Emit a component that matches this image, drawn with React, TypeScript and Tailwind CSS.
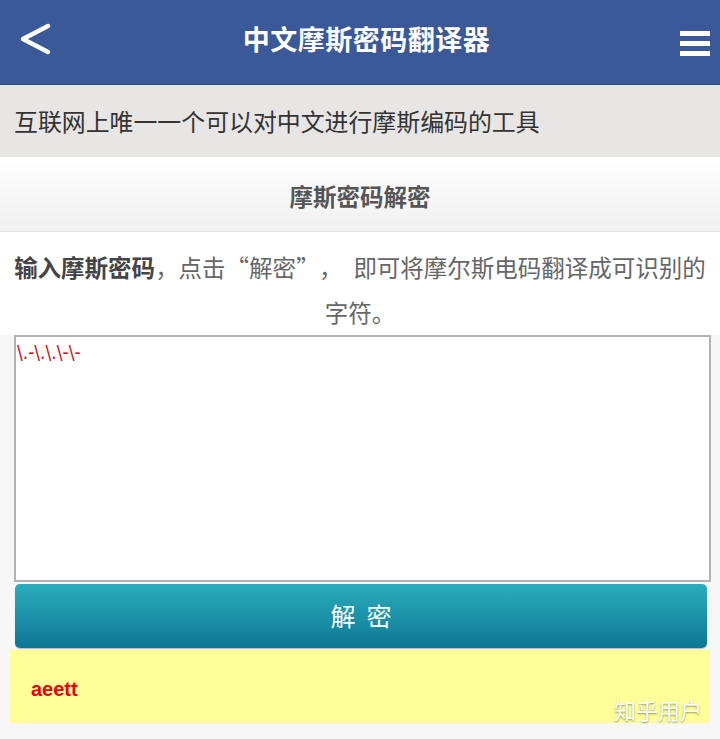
import React from "react"

const cjk = { fontFamily: '"Noto Sans CJK SC", "Noto Sans", sans-serif' }

function Header() {
  return (
    <div className="relative flex h-[85px] items-center justify-center border-b border-[#2f4a82] bg-[#3b5998] pb-[6px] pl-[13px]">
      <svg
        className="absolute left-[18px] top-[22px]"
        width="36"
        height="34"
        viewBox="0 0 36 34"
        fill="none"
      >
        <polyline
          points="30,4 5,17 30,30"
          stroke="white"
          strokeWidth="4.5"
          strokeLinecap="round"
          strokeLinejoin="round"
        />
      </svg>
      <h1 className="text-[27px] font-bold tracking-[0.5px] text-white">中文摩斯密码翻译器</h1>
      <div className="absolute right-[10px] top-[31px] flex w-[30px] flex-col gap-[5px]">
        <span className="h-[5px] bg-white" />
        <span className="h-[5px] bg-white" />
        <span className="h-[5px] bg-white" />
      </div>
    </div>
  )
}

export default function App() {
  return (
    <div className="relative min-h-[739px] bg-[#f5f6f8]" style={cjk}>
      <Header />

      <div className="flex h-[72px] items-center bg-[#e7e6e5] pl-[14px] text-[23.9px] text-[#333]">
        互联网上唯一一个可以对中文进行摩斯编码的工具
      </div>

      <div className="flex h-[75px] items-center justify-center border-b border-[#e2e2e2] bg-gradient-to-b from-white to-[#f0f0f0] pt-[5px] text-[23.5px] font-bold text-[#555]">
        摩斯密码解密
      </div>

      <div className="bg-white">
        <p className="whitespace-nowrap px-[12px] pt-[13px] text-center text-[23.5px] leading-[45px] text-[#666]">
          <b className="font-bold text-[#444]">输入摩斯密码</b>，点击“解密<span className="mr-[11px]">”</span>
          <span className="mr-[11px]">，</span>即可将摩尔斯电码翻译成可识别的
          <br />
          字符。
        </p>
      </div>

      <div className="bg-[#f7f7f7] pb-[16px]">
        <div className="ml-[14px] h-[247px] w-[697px] border-2 border-[#b3b3b3] bg-white px-[1px] pt-[1px]">
          <span
            className="text-[19px] text-[#c8101a]"
            style={{ fontFamily: '"DejaVu Sans Condensed", "Liberation Sans", sans-serif' }}
          >
            \.-\.\.\-\-
          </span>
        </div>

        <button className="ml-[15px] mt-[2px] flex h-[64px] w-[692px] items-center justify-center gap-[11px] rounded-[5px] bg-gradient-to-b from-[#2badbd] to-[#0c7893] text-[25px] text-white shadow-[0_1px_1px_rgba(0,0,0,0.25)]">
          <span>解</span>
          <span>密</span>
        </button>

        <div className="relative ml-[10px] mt-[2px] flex h-[73px] w-[700px] items-center bg-[#ffff99] pl-[21px] pt-[5px]">
          <span
            className="text-[20px] font-bold text-[#e8000b]"
            style={{ fontFamily: '"Liberation Sans", Arial, sans-serif' }}
          >
            aeett
          </span>
          <span className="absolute bottom-[-3px] right-[8px] text-[22px] text-white [text-shadow:0_1px_2px_rgba(0,0,0,0.45)]">
            知乎用户
          </span>
        </div>
      </div>
    </div>
  )
}
